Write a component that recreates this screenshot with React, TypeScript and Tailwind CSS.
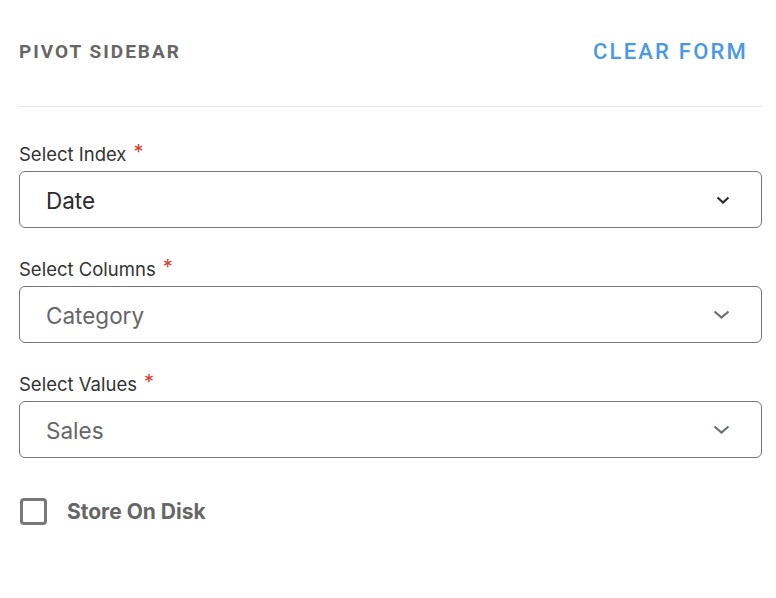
const ROBOTO = { fontFamily: "Roboto, 'Noto Sans', sans-serif" };
const INTER = { fontFamily: "Inter, 'Noto Sans', sans-serif" };

interface SelectFieldProps {
  label: string;
  value: string;
  filled?: boolean;
}

function Chevron({ filled }: { filled?: boolean }) {
  // small chevron, the "filled" one is a bit narrower/darker
  return filled ? (
    <svg width="14" height="8" viewBox="0 0 14 8" className="text-[#2b2b2b]">
      <polyline points="1.5,1.5 7,6.5 12.5,1.5" fill="none" stroke="currentColor" strokeWidth="2.2" />
    </svg>
  ) : (
    <svg width="17" height="9" viewBox="0 0 17 9" className="text-[#6b7078]">
      <polyline points="1.5,1.5 8.5,7.5 15.5,1.5" fill="none" stroke="currentColor" strokeWidth="2.2" />
    </svg>
  );
}

function SelectField({ label, value, filled }: SelectFieldProps) {
  return (
    <div className="flex flex-col" style={INTER}>
      <label className="flex items-start text-[18.5px] leading-[22px] text-[#333333] mb-[6px]">
        {label}
        <span className="ml-[7px] text-[#d93a2f] text-[20px] leading-[18px]">*</span>
      </label>
      <div className="flex h-[57px] items-center justify-between rounded-[6px] border border-[#767676] pl-[26px] pr-[31px]">
        <span className={`pt-[2px] text-[22.5px] ${filled ? "text-[#2b2b2b]" : "text-[#666666]"}`}>{value}</span>
        <Chevron filled={filled} />
      </div>
    </div>
  );
}

export default function App() {
  return (
    <div className="min-h-screen w-full bg-white pl-[19px] pr-[14px]">
      <div
        className="flex h-[107px] items-center justify-between border-b border-[#e6e6e6] pb-[4px]"
        style={ROBOTO}
      >
        <span className="pt-[2px] text-[19px] font-bold tracking-[2px] text-[#666666]">PIVOT SIDEBAR</span>
        <button className="mr-[14px] text-[22px] font-medium tracking-[2.2px] text-[#4a98e8]">CLEAR FORM</button>
      </div>
      <div className="mt-[36px] flex flex-col gap-[30px]">
        <SelectField label="Select Index" value="Date" filled />
        <SelectField label="Select Columns" value="Category" />
        <SelectField label="Select Values" value="Sales" />
      </div>
      <div className="mt-[40px] ml-[1px] flex items-center gap-[20px]" style={INTER}>
        <span className="h-[27px] w-[27px] rounded-[4px] border-[3px] border-[#777777]" />
        <span className="text-[21px] leading-[27px] font-bold text-[#666666]">Store On Disk</span>
      </div>
    </div>
  );
}
